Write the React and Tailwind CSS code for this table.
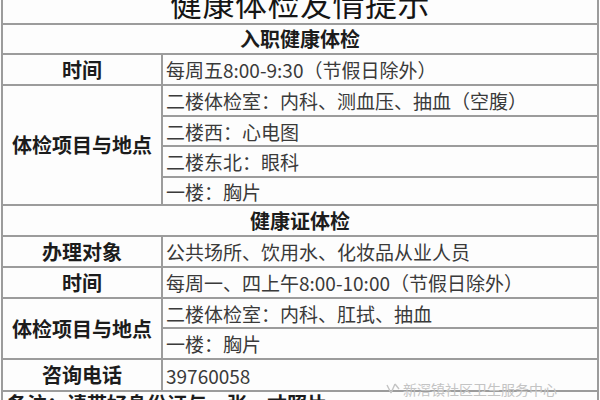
import React from 'react'

// 健康体检友情提示 — 表格截图
const font = { fontFamily: '"Noto Sans CJK SC", "Noto Sans", sans-serif' }

function Label({ children }) {
  return (
    <div className="w-[160px] shrink-0 border-r-2 border-[#9c9c9c] flex items-center justify-center text-[20px] font-bold text-[#1c1c1c] leading-none">
      {children}
    </div>
  )
}

function Value({ children, last, h = 'h-[31px]' }) {
  return (
    <div className={`${h} flex items-center pl-[3px] text-[19px] text-[#3a3a3a] leading-none ${last ? '' : 'border-b-2 border-[#9c9c9c]'}`}>
      {children}
    </div>
  )
}

function Row({ label, value, h = 'h-[31px]' }) {
  return (
    <div className={`${h} flex border-b-2 border-[#9c9c9c]`}>
      <Label>{label}</Label>
      <div className="flex-1 flex items-center pl-[3px] text-[19px] text-[#3a3a3a] leading-none">{value}</div>
    </div>
  )
}

function Group({ label, items, heights }) {
  return (
    <div className="flex border-b-2 border-[#9c9c9c]">
      <Label>{label}</Label>
      <div className="flex-1 flex flex-col">
        {items.map((t, i) => (
          <Value key={i} last={i === items.length - 1} h={heights[i]}>{t}</Value>
        ))}
      </div>
    </div>
  )
}

function Header({ children, h = 'h-[31px]' }) {
  return (
    <div className={`${h} flex items-center justify-center border-b-2 border-[#9c9c9c] text-[20px] font-bold text-[#1c1c1c] leading-none`}>
      {children}
    </div>
  )
}

export default function App() {
  return (
    <div className="w-[600px] h-[400px] overflow-hidden bg-[#fdfdfd] relative" style={font}>
      <div className="ml-[1px] w-[598px] border-x-2 border-[#9c9c9c]">
        <div className="h-[25px] overflow-hidden flex items-end justify-center border-b-2 border-[#9c9c9c]">
          <span className="text-[32px] leading-none text-[#151515] pb-[5px] tracking-[0.5px]">健康体检友情提示</span>
        </div>
        <Header h="h-[30px]">入职健康体检</Header>
        <Row label="时间" value="每周五8:00-9:30（节假日除外）" />
        <Group
          label="体检项目与地点"
          items={['二楼体检室：内科、测血压、抽血（空腹）', '二楼西：心电图', '二楼东北：眼科', '一楼：胸片']}
          heights={['h-[31px]', 'h-[30px]', 'h-[31px]', 'h-[26px]']}
        />
        <Header>健康证体检</Header>
        <Row label="办理对象" value="公共场所、饮用水、化妆品从业人员" />
        <Row label="时间" value="每周一、四上午8:00-10:00（节假日除外）" />
        <Group
          label="体检项目与地点"
          items={['二楼体检室：内科、肛拭、抽血', '一楼：胸片']}
          heights={['h-[30px]', 'h-[29px]']}
        />
        <Row label="咨询电话" value="39760058" h="h-[32px]" />
        <div className="h-[20px] pl-[4px] pt-[2px] text-[20px] font-bold text-[#1c1c1c] leading-none">
          备注：请带好身份证与一张一寸照片
        </div>
      </div>

      {/* 水印 */}
      <div className="absolute left-[386px] top-[382px] flex items-center gap-[3px] text-[#c4c4c4] text-[14px] leading-none">
        <svg width="14" height="12" viewBox="0 0 14 12" fill="none" stroke="#c4c4c4" strokeWidth="1.4">
          <path d="M1 2l4 8M5 10l4-9M9 1l4 5" />
        </svg>
        <span>新滘镇社区卫生服务中心</span>
      </div>
    </div>
  )
}
